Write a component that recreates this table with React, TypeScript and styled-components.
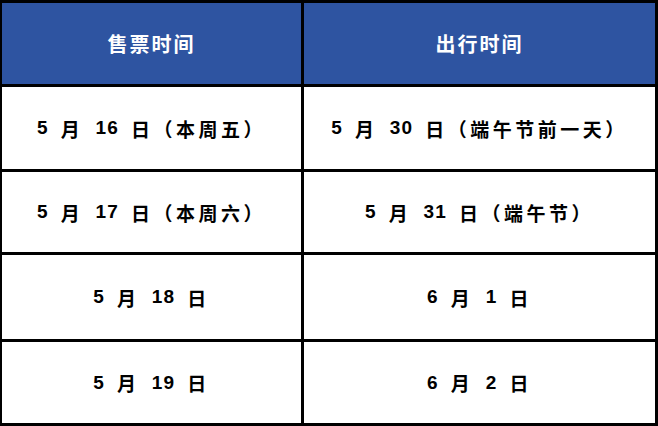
import styled, { createGlobalStyle } from "styled-components";

const rows = [
  ["5 月 16 日（本周五）", "5 月 30 日（端午节前一天）"],
  ["5 月 17 日（本周六）", "5 月 31 日（端午节）"],
  ["5 月 18 日", "6 月 1 日"],
  ["5 月 19 日", "6 月 2 日"],
];

// digits sit tight together, the Chinese characters are spaced out
function DateText({ text }: { text: string }) {
  const parts = text.split(/(\s*\d+\s*)/).filter(Boolean);
  return (
    <>
      {parts.map((p, i) =>
        /\d/.test(p) ? <Num key={i}>{p}</Num> : <span key={i}>{p}</span>
      )}
    </>
  );
}

function App() {
  return (
    <>
      <GlobalStyle />
      <Table>
        <HeadCell>售票时间</HeadCell>
        <HeadCell>出行时间</HeadCell>
        {rows.map(([sale, travel]) => [
          <Cell key={sale}>
            <DateText text={sale} />
          </Cell>,
          <Cell key={travel}>
            <DateText text={travel} />
          </Cell>,
        ])}
      </Table>
    </>
  );
}

const GlobalStyle = createGlobalStyle`
  body {
    margin: 0;
    background: #fff;
    font-family: "Liberation Sans", "Noto Sans CJK SC", sans-serif;
  }
`;

const Table = styled.div`
  display: grid;
  grid-template-columns: 299px 351px;
  grid-template-rows: 81px 82px 80px 84px 81px;
  gap: 3px;
  width: 658px;
  height: 426px;
  box-sizing: border-box;
  padding: 3px 3px 3px 2px;
  background: #000;
`;

const HeadCell = styled.div`
  display: flex;
  align-items: center;
  justify-content: center;
  background: #2e54a1;
  color: #fff;
  font-size: 20px;
  font-weight: 700;
  letter-spacing: 2px;
`;

const Cell = styled.div`
  display: flex;
  align-items: center;
  justify-content: center;
  background: #fff;
  color: #000;
  font-size: 19px;
  font-weight: 700;
  letter-spacing: 3.5px;
  white-space: pre;
`;

const Num = styled.span`
  letter-spacing: 1px;
  word-spacing: 6px;
`;

export default App;
